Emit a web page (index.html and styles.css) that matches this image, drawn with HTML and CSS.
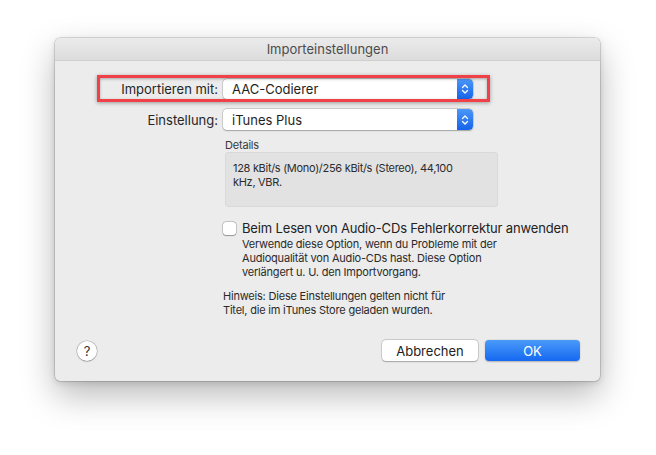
FILE: index.html
```html
<!DOCTYPE html>
<html lang="de">
<head>
<meta charset="utf-8">
<title>Importeinstellungen</title>
<link rel="stylesheet" href="styles.css">
</head>
<body>
<div class="window">
  <div class="titlebar">Importeinstellungen</div>
  <div class="content">
    <div class="row row-first">
      <span class="label">Importieren mit:</span>
      <div class="popup">
        <span class="popup-text">AAC-Codierer</span>
        <span class="stepper">
          <svg width="8" height="12" viewBox="0 0 8 12"><path d="M1.5 4.5 L4 2 L6.5 4.5 M1.5 7.5 L4 10 L6.5 7.5" fill="none" stroke="#fff" stroke-width="1.3" stroke-linecap="round" stroke-linejoin="round"/></svg>
        </span>
      </div>
    </div>
    <div class="row">
      <span class="label">Einstellung:</span>
      <div class="popup">
        <span class="popup-text">iTunes Plus</span>
        <span class="stepper">
          <svg width="8" height="12" viewBox="0 0 8 12"><path d="M1.5 4.5 L4 2 L6.5 4.5 M1.5 7.5 L4 10 L6.5 7.5" fill="none" stroke="#fff" stroke-width="1.3" stroke-linecap="round" stroke-linejoin="round"/></svg>
        </span>
      </div>
    </div>
    <div class="section">
      <div class="details-label">Details</div>
      <div class="details-box">128 kBit/s (Mono)/256 kBit/s (Stereo), 44,100 kHz, VBR.</div>
      <div class="check-row">
        <span class="checkbox"></span>
        <span class="check-label">Beim Lesen von Audio-CDs Fehlerkorrektur anwenden</span>
      </div>
      <p class="check-desc">Verwende diese Option, wenn du Probleme mit der Audioqualität von Audio-CDs hast. Diese Option verlängert u. U. den Importvorgang.</p>
      <p class="hint">Hinweis: Diese Einstellungen gelten nicht für Titel, die im iTunes Store geladen wurden.</p>
    </div>
    <div class="footer">
      <span class="help">?</span>
      <div class="buttons">
        <span class="btn">Abbrechen</span>
        <span class="btn btn-primary">OK</span>
      </div>
    </div>
  </div>
</div>
<div class="highlight"></div>
</body>
</html>
```

FILE: styles.css
```css
html, body {
  margin: 0;
  padding: 0;
  background: #ffffff;
}
body {
  padding: 38px 0 0 55px;
  font-family: "Inter", "Roboto", "Liberation Sans", sans-serif;
  color: #222;
  position: relative;
  height: 455px;
  box-sizing: border-box;
}
.window {
  width: 545px;
  height: 343px;
  background: #ececec;
  border-radius: 5px;
  box-shadow: 0 0 0 0.5px rgba(0,0,0,0.25), 0 14px 34px rgba(0,0,0,0.28), 0 2px 6px rgba(0,0,0,0.12);
  overflow: hidden;
  display: flex;
  flex-direction: column;
}
.titlebar {
  height: 23px;
  line-height: 23px;
  text-align: center;
  font-size: 13px;
  color: #4c4c4c;
  background: linear-gradient(#ebebeb, #dcdcdc);
  border-bottom: 1px solid #cfcfcf;
  box-sizing: border-box;
}
.content {
  flex: 1;
  display: flex;
  flex-direction: column;
  padding-top: 18px;
}
.row {
  display: flex;
  align-items: center;
  height: 20px;
  margin-bottom: 10px;
}
.row + .row {
  height: 21px;
}
.label {
  width: 163px;
  text-align: right;
  margin-right: 5px;
  font-size: 13px;
  color: #262626;
}
.popup {
  width: 250px;
  height: 100%;
  box-sizing: border-box;
  background: #ffffff;
  border-radius: 4px;
  box-shadow: 0 0 0 0.5px rgba(0,0,0,0.22), 0 0.5px 1.5px rgba(0,0,0,0.22);
  display: flex;
  align-items: center;
  justify-content: space-between;
  overflow: hidden;
}
.popup-text {
  font-size: 13px;
  padding-left: 9px;
  color: #1e1e1e;
}
.stepper {
  width: 16px;
  height: 100%;
  background: linear-gradient(#4b97f8, #1564e9);
  display: flex;
  align-items: center;
  justify-content: center;
  border-radius: 0 4px 4px 0;
}
.section {
  padding-left: 168px;
  margin-top: -1px;
}
.details-label {
  font-size: 11px;
  color: #3a3a3a;
  padding-left: 2px;
  line-height: 13px;
  letter-spacing: -0.2px;
}
.details-box {
  margin: 0 0 0 2px;
  width: 273px;
  height: 55px;
  box-sizing: border-box;
  background: #e2e2e2;
  border: 1px solid #d9d9d9;
  border-radius: 3px;
  padding: 8px 20px 0 7px;
  font-size: 11px;
  line-height: 14px;
  letter-spacing: -0.3px;
  color: #2c2c2c;
}
.check-row {
  display: flex;
  align-items: center;
  margin-top: 14px;
  height: 14px;
}
.checkbox {
  width: 13px;
  height: 13px;
  background: #fff;
  border-radius: 3px;
  box-shadow: 0 0 0 0.5px rgba(0,0,0,0.3), 0 0.5px 1px rgba(0,0,0,0.25);
  margin-right: 6px;
  flex-shrink: 0;
}
.check-label {
  font-size: 13px;
  letter-spacing: -0.15px;
  color: #222;
}
.check-desc {
  margin: 2px 0 0 19px;
  width: 270px;
  font-size: 11px;
  line-height: 14px;
  letter-spacing: -0.2px;
  color: #2a2a2a;
}
.hint {
  margin: 10px 0 0 0;
  width: 236px;
  font-size: 11px;
  line-height: 14px;
  letter-spacing: -0.2px;
  color: #2a2a2a;
}
.footer {
  margin-top: auto;
  padding: 0 20px 20px 22px;
  display: flex;
  align-items: center;
  justify-content: space-between;
}
.help {
  width: 20px;
  height: 20px;
  border-radius: 50%;
  background: #fff;
  box-shadow: 0 0 0 0.5px rgba(0,0,0,0.25), 0 0.5px 1.5px rgba(0,0,0,0.25);
  font-size: 13px;
  color: #333;
  display: flex;
  align-items: center;
  justify-content: center;
}
.buttons {
  display: flex;
  gap: 7px;
}
.btn {
  width: 96px;
  height: 21px;
  box-sizing: border-box;
  background: #fff;
  border-radius: 4px;
  box-shadow: 0 0 0 0.5px rgba(0,0,0,0.22), 0 0.5px 1.5px rgba(0,0,0,0.22);
  font-size: 13px;
  color: #222;
  display: flex;
  align-items: center;
  justify-content: center;
}
.btn-primary {
  width: 95px;
  background: linear-gradient(#4a9af9, #1568f0);
  color: #fff;
  box-shadow: 0 0.5px 1.5px rgba(0,0,0,0.25);
}
.highlight {
  position: absolute;
  left: 97px;
  top: 75px;
  width: 393px;
  height: 27px;
  box-sizing: border-box;
  border: 3px solid #ef4147;
  box-shadow: 0 1px 4px rgba(0,0,0,0.35), inset 0 1px 3px rgba(0,0,0,0.3);
  pointer-events: none;
}
```
